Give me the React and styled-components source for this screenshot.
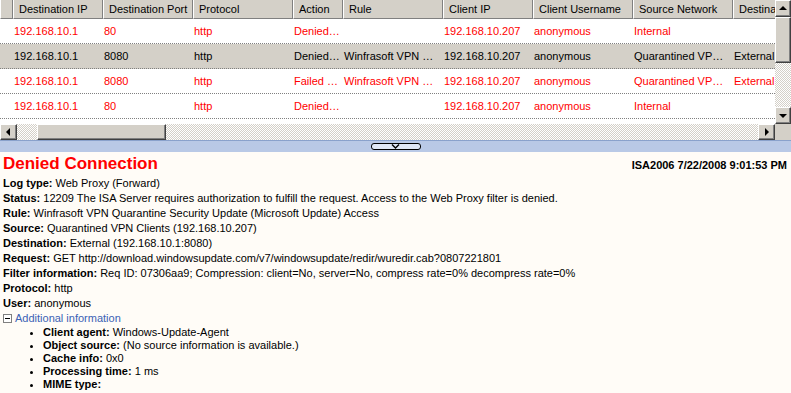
import styled, { createGlobalStyle } from "styled-components";

const GlobalStyle = createGlobalStyle`
  html, body {
    margin: 0;
    padding: 0;
  }
  body {
    background: #fffcf7;
    font-family: "Liberation Sans", Arial, sans-serif;
    font-size: 11px;
    overflow: hidden;
  }
`

const Window = styled.div`
  width: 791px;
  height: 393px;
  display: flex;
  flex-direction: column;
  overflow: hidden;
`

const LogPane = styled.div`
  flex: none;
  display: grid;
  grid-template-columns: 775px 16px;
  grid-template-rows: 124px 16px;
  background: #fff;
`

const Viewport = styled.div`
  overflow: hidden;
`

const HeaderRow = styled.div`
  display: flex;
  height: 19px;
  background: #d4d0c8;
  width: max-content;
`

const HeaderCell = styled.div`
  flex: none;
  width: ${p => p.$w}px;
  box-sizing: border-box;
  padding-left: 5px;
  line-height: 18px;
  border-left: 1px solid #fff;
  border-right: 1px solid #808080;
  border-bottom: 1px solid #808080;
  white-space: nowrap;
  overflow: hidden;
  color: #000;
`

const Row = styled.div`
  display: flex;
  align-items: center;
  height: 25px;
  width: max-content;
  box-sizing: border-box;
  border-bottom: 1px dotted #808080;
  background: ${p => (p.$selected ? "#d4d0c8" : "#fff")};
  color: ${p => (p.$alert ? "#ff0000" : "#000")};
`

const Cell = styled.div`
  flex: none;
  width: ${p => p.$w}px;
  box-sizing: border-box;
  padding: 0 3px 0 1px;
  white-space: nowrap;
  overflow: hidden;
  text-overflow: ellipsis;
`

const raised = `
  box-sizing: border-box;
  background: #d4d0c8;
  border: 1px solid;
  border-color: #fff #404040 #404040 #fff;
  box-shadow: inset -1px -1px #808080;
`

const VScroll = styled.div`
  display: flex;
  flex-direction: column;
  background: repeating-conic-gradient(#d4d0c8 0 25%, #fff 0 50%) 0 0 / 2px 2px;
`

const HScroll = styled.div`
  display: flex;
  background: repeating-conic-gradient(#d4d0c8 0 25%, #fff 0 50%) 0 0 / 2px 2px;
`

const ArrowButton = styled.div`
  ${raised}
  flex: none;
  width: ${p => (p.$vertical ? "16px" : "17px")};
  height: ${p => (p.$vertical ? "17px" : "16px")};
  display: flex;
  align-items: center;
  justify-content: center;
`

const Arrow = styled.span`
  width: 0;
  height: 0;
  border: 4px solid transparent;
  ${p => p.$dir === "up" && "border-bottom-color: #000; border-top-width: 0; margin-top: -1px;"}
  ${p => p.$dir === "down" && "border-top-color: #000; border-bottom-width: 0; margin-top: 1px;"}
  ${p => p.$dir === "left" && "border-right-color: #000; border-left-width: 0; margin-left: -1px;"}
  ${p => p.$dir === "right" && "border-left-color: #000; border-right-width: 0; margin-left: 1px;"}
`

const Track = styled.div`
  flex: 1;
  display: flex;
  flex-direction: ${p => (p.$vertical ? "column" : "row")};
  padding: ${p => (p.$vertical ? "0" : "0 0 0 20px")};
`

const Thumb = styled.div`
  ${raised}
  flex: none;
  width: ${p => (p.$vertical ? "16px" : `${p.$size}px`)};
  height: ${p => (p.$vertical ? `${p.$size}px` : "16px")};
`

const Corner = styled.div`
  background: #d4d0c8;
`

const Splitter = styled.div`
  flex: none;
  height: 12px;
  box-sizing: border-box;
  background: #b9c9e6;
  border-top: 1px solid #8aa2cc;
  display: flex;
  justify-content: center;
  align-items: flex-end;
  padding-bottom: 2px;
`

const SplitterButton = styled.div`
  width: 50px;
  height: 7px;
  box-sizing: border-box;
  border: 1px solid #000;
  border-radius: 3px;
  background: #dfe7f5;
  display: flex;
  justify-content: center;
  align-items: center;
`

const Details = styled.div`
  flex: 1;
  min-height: 0;
  overflow: hidden;
  background: #fffcf7;
  padding: 0 4px 0 3px;
  color: #000;
`

const TitleRow = styled.div`
  display: flex;
  justify-content: space-between;
  align-items: center;
  height: 24px;
`

const Title = styled.h1`
  margin: 0;
  font-size: 17px;
  font-weight: bold;
  color: #ff0000;
`

const Stamp = styled.span`
  font-weight: bold;
  font-size: 11px;
  margin-top: 1px;
`

const Line = styled.div`
  line-height: 15px;
  white-space: nowrap;
`

const Label = styled.b`
  font-weight: bold;
`

const Toggle = styled.div`
  display: flex;
  align-items: center;
  gap: 3px;
  line-height: 15px;
  color: #3b62b5;
`

const ToggleBox = styled.span`
  width: 9px;
  height: 9px;
  box-sizing: border-box;
  border: 1px solid #808080;
  background: #fff;
  position: relative;
  &::after {
    content: "";
    position: absolute;
    left: 1px;
    right: 1px;
    top: 3px;
    height: 1px;
    background: #000;
  }
`

const BulletList = styled.ul`
  margin: 0;
  padding-left: 40px;
  list-style: disc;
`

const Bullet = styled.li`
  line-height: 13px;
  white-space: nowrap;
`

const columns = [
  { title: "", w: 13 },
  { title: "Destination IP", w: 90, key: "dip" },
  { title: "Destination Port", w: 90, key: "port" },
  { title: "Protocol", w: 100, key: "proto" },
  { title: "Action", w: 50, key: "action" },
  { title: "Rule", w: 100, key: "rule" },
  { title: "Client IP", w: 90, key: "cip" },
  { title: "Client Username", w: 100, key: "user" },
  { title: "Source Network", w: 100, key: "src" },
  { title: "Destination Network", w: 100, key: "dst" },
]

const RULE = "Winfrasoft VPN Quarantine Security Update (Microsoft Update) Access"

const rows = [
  { alert: true, dip: "192.168.10.1", port: "80", proto: "http", action: "Denied Connection", rule: "", cip: "192.168.10.207", user: "anonymous", src: "Internal", dst: "" },
  { selected: true, dip: "192.168.10.1", port: "8080", proto: "http", action: "Denied Connection", rule: RULE, cip: "192.168.10.207", user: "anonymous", src: "Quarantined VPN Clients", dst: "External" },
  { alert: true, dip: "192.168.10.1", port: "8080", proto: "http", action: "Failed Connection Attempt", rule: RULE, cip: "192.168.10.207", user: "anonymous", src: "Quarantined VPN Clients", dst: "External" },
  { alert: true, dip: "192.168.10.1", port: "80", proto: "http", action: "Denied Connection", rule: "", cip: "192.168.10.207", user: "anonymous", src: "Internal", dst: "" },
]

const fields = [
  ["Log type:", "Web Proxy (Forward)"],
  ["Status:", "12209 The ISA Server requires authorization to fulfill the request. Access to the Web Proxy filter is denied."],
  ["Rule:", RULE],
  ["Source:", "Quarantined VPN Clients (192.168.10.207)"],
  ["Destination:", "External (192.168.10.1:8080)"],
  ["Request:", "GET http://download.windowsupdate.com/v7/windowsupdate/redir/wuredir.cab?0807221801"],
  ["Filter information:", "Req ID: 07306aa9; Compression: client=No, server=No, compress rate=0% decompress rate=0%"],
  ["Protocol:", "http"],
  ["User:", "anonymous"],
]

const extra = [
  ["Client agent:", "Windows-Update-Agent"],
  ["Object source:", "(No source information is available.)"],
  ["Cache info:", "0x0"],
  ["Processing time:", "1 ms"],
  ["MIME type:", ""],
]

const App = () => {
  return (
    <Window>
      <GlobalStyle />
      <LogPane>
        <Viewport>
          <HeaderRow>
            {columns.map((col, index) => (
              <HeaderCell key={index} $w={col.w}>{col.title}</HeaderCell>
            ))}
          </HeaderRow>
          {rows.map((row, index) => (
            <Row key={index} $alert={row.alert} $selected={row.selected}>
              {columns.map((col, i) => (
                <Cell key={i} $w={col.w}>{col.key ? row[col.key] : ""}</Cell>
              ))}
            </Row>
          ))}
        </Viewport>
        <VScroll>
          <ArrowButton $vertical><Arrow $dir="up" /></ArrowButton>
          <Track $vertical>
            <Thumb $vertical $size={46} />
          </Track>
          <ArrowButton $vertical><Arrow $dir="down" /></ArrowButton>
        </VScroll>
        <HScroll>
          <ArrowButton><Arrow $dir="left" /></ArrowButton>
          <Track>
            <Thumb $size={129} />
          </Track>
          <ArrowButton><Arrow $dir="right" /></ArrowButton>
        </HScroll>
        <Corner />
      </LogPane>
      <Splitter>
        <SplitterButton>
          <svg width="9" height="5" viewBox="0 0 9 5">
            <path d="M1 0.5 L4.5 4 L8 0.5" fill="none" stroke="#000" strokeWidth="1.4" />
          </svg>
        </SplitterButton>
      </Splitter>
      <Details>
        <TitleRow>
          <Title>Denied Connection</Title>
          <Stamp>ISA2006 7/22/2008 9:01:53 PM</Stamp>
        </TitleRow>
        {fields.map(([label, value], index) => (
          <Line key={index}><Label>{label}</Label> {value}</Line>
        ))}
        <Toggle><ToggleBox />Additional information</Toggle>
        <BulletList>
          {extra.map(([label, value], index) => (
            <Bullet key={index}><Label>{label}</Label> {value}</Bullet>
          ))}
        </BulletList>
      </Details>
    </Window>
  )
}

export default App;
